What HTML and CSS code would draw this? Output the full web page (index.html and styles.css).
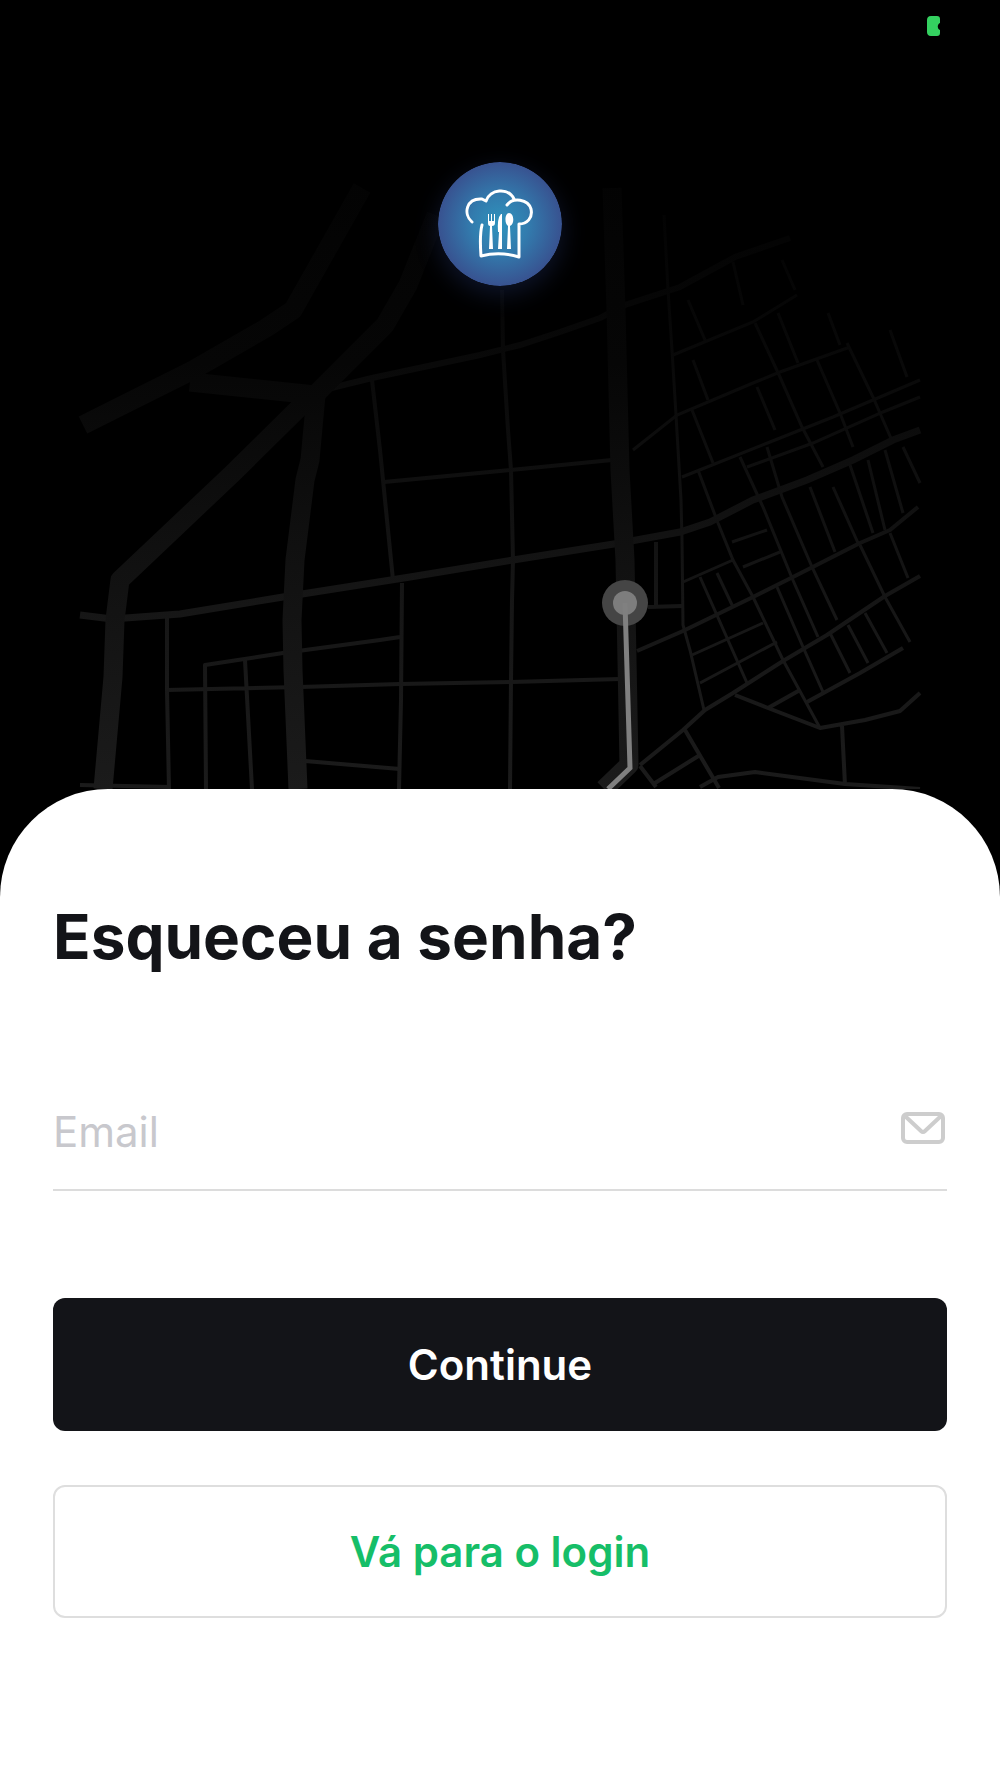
FILE: index.html
```html
<!DOCTYPE html>
<html lang="pt-BR">
<head>
<meta charset="utf-8">
<meta name="viewport" content="width=device-width, initial-scale=1">
<title>Esqueceu a senha?</title>
<link rel="stylesheet" href="styles.css">
</head>
<body>
<header class="hero">
  <svg class="map" viewBox="0 0 1000 789" aria-hidden="true">
    <defs>
      <linearGradient id="road" gradientUnits="userSpaceOnUse" x1="0" y1="180" x2="0" y2="789">
        <stop offset="0" stop-color="#030303"/>
        <stop offset="0.3" stop-color="#060606"/>
        <stop offset="0.6" stop-color="#101010"/>
        <stop offset="1" stop-color="#1b1b1b"/>
      </linearGradient>
      <linearGradient id="street" gradientUnits="userSpaceOnUse" x1="0" y1="180" x2="0" y2="789">
        <stop offset="0" stop-color="#020202"/>
        <stop offset="0.2" stop-color="#060606"/>
        <stop offset="0.4" stop-color="#0c0c0c"/>
        <stop offset="0.7" stop-color="#161616"/>
        <stop offset="1" stop-color="#1b1b1b"/>
      </linearGradient>
    </defs>
    <g fill="none" stroke="url(#street)" stroke-width="4" stroke-linejoin="round">
      <path d="M372 380L380 450L393 580M502 290L503 350L508 430L511 470L513 560L512 600L511 680L510 789"/>
      <path d="M384 482L500 471L612 460M402 583L401 700L399 789M206 789L205 665L283 653L380 640L400 637"/>
      <path d="M245 660L252 789M167 617V690L169 789M167 690L300 687L400 684L511 682L620 679M305 761L400 769M80 785L170 787"/>
      <path d="M656 542V605M648 607L682 606M637 651L683 631L753 597L793 577L860 543L890 530L918 507"/>
      <path d="M640 765L683 730L705 710L733 693L783 661L827 635L885 596L920 576"/>
      <path d="M735 695L768 708L820 728L865 720L900 711L920 693M842 726L845 785M700 787L718 777L755 772L845 784L920 789"/>
      <path d="M640 766L656 787M685 730L719 788M655 783L700 755M768 708L800 690M807 702L860 673L903 648"/>
    </g>
    <g fill="none" stroke="url(#street)" stroke-width="3">
      <path d="M664 215L668 290L672 350L676 415L681 500L682 540L683 625L690 650L704 710"/>
      <path d="M698 470L718 523L733 560L753 597L783 660L820 728M683 582L733 560M743 567L780 552M732 542L767 530"/>
      <path d="M740 457L763 507L792 578L818 637M767 447L782 497L812 567L837 620M700 577L747 683M717 573L733 607"/>
      <path d="M692 655L763 623M700 683L777 642M777 587L803 647L823 692M830 633L850 673M848 625L868 663M865 613L887 653"/>
      <path d="M860 545L885 597L910 642M890 533L908 578M810 487L835 552M833 487L858 543M850 465L873 533M868 460L885 530M885 450L903 513M903 447L920 483"/>
      <path d="M633 450L677 415L753 383L780 372L850 347M682 477L770 442L833 417L873 400L920 380"/>
      <path d="M673 355L753 322L797 295M747 467L813 443L883 412L920 397M688 300L705 340M693 360L708 400M692 410L713 463"/>
      <path d="M755 323L780 377L802 427L823 467M778 313L798 363M757 387L775 430M817 360L840 413L853 447M847 343L873 397L893 443"/>
      <path d="M890 330L907 377M733 262L743 305M782 260L795 290M828 313L840 345"/>
    </g>
    <path fill="none" stroke="url(#street)" stroke-width="6" d="M315 392L372 378L480 355L520 345L560 332L600 318L625 305L680 287L735 257L790 238"/>
    <path fill="none" stroke="url(#street)" stroke-width="7" d="M80 615L112 619L180 614L283 597L410 577L513 560L620 543L680 532L710 522L753 500L807 480L853 460L893 440L920 430"/>
    <g fill="none" stroke="url(#road)" stroke-width="19" stroke-linejoin="round">
      <path d="M362 188L293 310L266 328L193 370L83 425"/>
      <path d="M436 215L408 285L385 325L340 370L315 395L190 382"/>
      <path d="M312 395L233 473L120 580L115 620L113 677L103 789"/>
      <path d="M316 395L310 460L305 480L295 560L292 620L293 670L298 789"/>
      <path d="M612 188L616 310L620 470L625 560L627 660L629 765L604 789"/>
    </g>
    <circle cx="625" cy="603" r="23" fill="#454545"/>
    <circle cx="625" cy="603" r="12" fill="#7d7d7d"/>
    <path fill="none" stroke="#808080" stroke-width="5" d="M625 603L630 768L608 789"/>
  </svg>
  <svg class="battery" viewBox="0 0 13 20" aria-hidden="true">
    <path fill="#34d160" d="M4 0H10C12 0 13 1 13 3V7C10 8 10 13 13 14V17C13 19 12 20 10 20H4C1 20 0 18 0 16V4C0 2 1 0 4 0Z"/>
  </svg>
  <svg class="logo" viewBox="0 0 124 124" role="img" aria-label="Chef">
    <defs>
      <radialGradient id="disc">
        <stop offset="0" stop-color="#2e93bd"/>
        <stop offset="0.45" stop-color="#327cae"/>
        <stop offset="1" stop-color="#385290"/>
      </radialGradient>
    </defs>
    <circle cx="62" cy="62" r="62" fill="url(#disc)"/>
    <g fill="none" stroke="#fff" stroke-width="3" stroke-linecap="round" stroke-linejoin="round">
      <path d="M34 60C25 52 28 36 44 37L48 39C52 27 70 25 76 37"/>
      <path d="M69 43C75 35 90 37 93 47C95 56 89 62 81 62V95C68 91 55 91 43 94C42 81 42 71 44 63"/>
    </g>
    <g fill="#fff">
      <path d="M50 52V61Q50 64 52 64L51 87H55L54 64Q57 64 57 61V52H56V59H54V52H53V59H51V52Z"/>
      <path d="M63 52Q59 56 60 70H61L60 87H64V52Z"/>
      <path d="M71 51C76 51 77 62 72 64L73 87H69L70 64C66 61 67 51 71 51Z"/>
    </g>
  </svg>
</header>
<main class="sheet">
  <h1 class="title">Esqueceu a senha?</h1>
  <form class="form">
    <div class="field">
      <input class="field-input" type="email" placeholder="Email" aria-label="Email">
      <svg class="field-icon" viewBox="0 0 44 32" fill="none" stroke="#cdcdcd" stroke-width="4" stroke-linejoin="round" stroke-linecap="round" aria-hidden="true">
        <rect x="2" y="2" width="40" height="28" rx="4"/>
        <path d="M4 4L20 19Q22 21 24 19L40 4"/>
      </svg>
    </div>
    <button class="button button-primary" type="submit">Continue</button>
    <button class="button button-outline" type="button">Vá para o login</button>
  </form>
</main>
</body>
</html>
```

FILE: styles.css
```css
* {
  box-sizing: border-box;
}

body {
  margin: 0;
  min-height: 100vh;
  display: flex;
  flex-direction: column;
  background: #000;
  font-family: Inter, "Liberation Sans", sans-serif;
}

.hero {
  display: grid;
}

.hero > * {
  grid-area: 1 / 1;
}

.map {
  display: block;
  width: 100%;
}

.battery {
  width: 13px;
  height: 20px;
  margin: 16px 60px 0 0;
  justify-self: end;
}

.logo {
  width: 124px;
  height: 124px;
  margin-top: 162px;
  justify-self: center;
  border-radius: 50%;
  box-shadow: 0 8px 24px rgba(57, 86, 180, 0.24);
}

.sheet {
  flex: 1;
  padding: 110px 53px 80px;
  border-radius: 108px 108px 0 0;
  background: #fff;
}

.title {
  margin: 0;
  font-size: 62px;
  line-height: 76px;
  font-weight: 700;
  color: #131418;
}

.form {
  display: flex;
  flex-direction: column;
  margin-top: 98px;
}

.field {
  display: flex;
  align-items: center;
  height: 118px;
  margin-bottom: 107px;
  padding-bottom: 6px;
  border-bottom: 2px solid #dcdcdc;
}

.field-input {
  flex: 1;
  min-width: 0;
  padding: 8px 0 0;
  border: 0;
  outline: 0;
  background: none;
  font: 400 42px/48px Inter, "Liberation Sans", sans-serif;
  color: #131418;
}

.field-input::placeholder {
  color: #c8c8cd;
  opacity: 1;
}

.field-icon {
  width: 44px;
  height: 32px;
  margin-right: 2px;
}

.button {
  height: 133px;
  border: 0;
  border-radius: 12px;
  font: 600 42px/48px Inter, "Liberation Sans", sans-serif;
  cursor: pointer;
}

.button-primary {
  margin-bottom: 54px;
  background: #131418;
  color: #fff;
}

.button-outline {
  border: 2px solid #dedede;
  background: #fff;
  color: #16be68;
}
```
